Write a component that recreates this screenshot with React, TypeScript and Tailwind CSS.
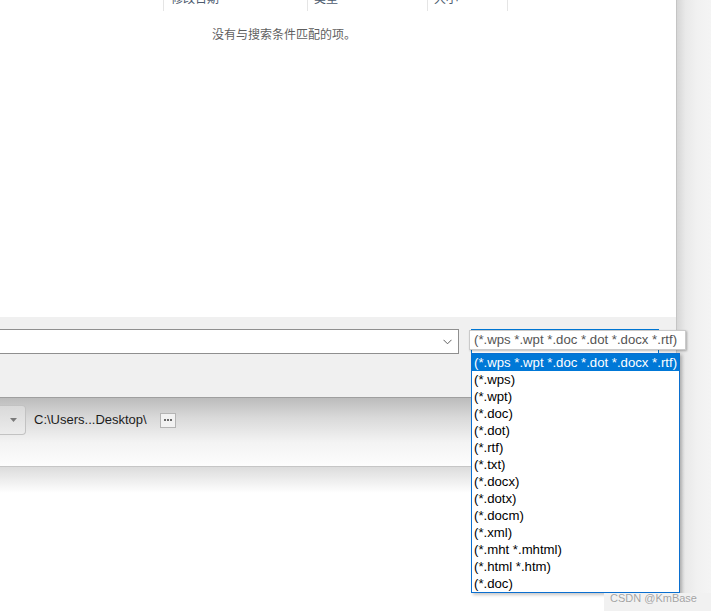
import type { ReactNode } from 'react';

const fileTypes = [
  '(*.wps *.wpt *.doc *.dot *.docx *.rtf)',
  '(*.wps)',
  '(*.wpt)',
  '(*.doc)',
  '(*.dot)',
  '(*.rtf)',
  '(*.txt)',
  '(*.docx)',
  '(*.dotx)',
  '(*.docm)',
  '(*.xml)',
  '(*.mht *.mhtml)',
  '(*.html *.htm)',
  '(*.doc)',
];

function HeaderCell({ width, children }: { width: string; children?: ReactNode }) {
  return <div className={`${width} shrink-0 border-r border-[#e5e5e5] pl-[6px]`}>{children}</div>;
}

export default function App() {
  return (
    <div className="relative flex h-[611px] w-[711px] overflow-hidden bg-white font-['Liberation_Sans',Arial,sans-serif]">
      {/* 对话框主体 */}
      <div className="flex w-[676px] shrink-0 flex-col">
        {/* 文件列表 */}
        <div className="h-[317px] shrink-0 bg-white">
          <div className="-mt-[8px] flex h-[19px] font-['Noto_Sans_CJK_SC',sans-serif] text-[12px] leading-[12px] text-[#4d5b6e]">
            <div className="w-[164px] shrink-0 border-r border-[#e5e5e5]" />
            <HeaderCell width="w-[144px]">
              <span className="pl-px">修改日期</span>
            </HeaderCell>
            <HeaderCell width="w-[120px]">类型</HeaderCell>
            <HeaderCell width="w-[80px]">大小</HeaderCell>
          </div>
          <p className="mt-[15px] pl-[212px] font-['Noto_Sans_CJK_SC',sans-serif] text-[12px] leading-[16px] text-[#5f5f5f]">
            没有与搜索条件匹配的项。
          </p>
        </div>

        {/* 文件名 / 保存类型 */}
        <div className="h-[80px] shrink-0 bg-[#f0f0f0]">
          <div className="mt-[12px] flex items-start">
            <div className="flex h-[25px] w-[459px] items-center justify-end border border-l-0 border-[#8f8f8f] bg-white pr-[5px]">
              <svg width="9" height="6" viewBox="0 0 9 6" className="mr-[1px]">
                <polyline points="0.5,0.8 4.5,4.8 8.5,0.8" fill="none" stroke="#606060" strokeWidth="1" />
              </svg>
            </div>
            <div className="ml-[12px] h-[25px] w-[188px] border border-[#0078d7] bg-white" />
          </div>
        </div>

        {/* 底部保存位置栏 */}
        <div className="h-[70px] shrink-0 border-t border-b border-t-[#9f9f9f] border-b-[#c6c6c6] bg-[linear-gradient(to_bottom,#bcbcbc,#dadada_30%,#f3f3f3_65%,#fdfdfd)]">
          <div className="mt-[7px] flex h-[30px] items-center">
            <div className="flex h-[30px] w-[26px] items-center justify-end rounded-r-[4px] border border-l-0 border-[#c2c2c2] bg-[linear-gradient(to_bottom,#d9d9d9,#ececec)] pr-[8px]">
              <svg width="7" height="4" viewBox="0 0 7 4">
                <polygon points="0,0 7,0 3.5,4" fill="#7a7a7a" />
              </svg>
            </div>
            <span className="ml-[8px] text-[13px] leading-[16px] text-[#1c1c1c]">C:\Users...Desktop\</span>
            <div className="ml-[13px] flex h-[15px] w-[16px] items-center justify-center gap-[1px] border border-[#b4b4b4] bg-[#f2f2f2]">
              <span className="h-[2px] w-[2px] bg-[#6a6a6a]" />
              <span className="h-[2px] w-[2px] bg-[#6a6a6a]" />
              <span className="h-[2px] w-[2px] bg-[#6a6a6a]" />
            </div>
          </div>
        </div>
        <div className="h-[26px] shrink-0 bg-[linear-gradient(to_bottom,#dcdcdc,#ffffff)]" />
        <div className="flex-1 bg-white" />
      </div>

      {/* 窗口右侧阴影 */}
      <div className="flex-1 border-l border-[#c4c4c4] bg-[linear-gradient(to_right,#d6d6d6,#e9e9e9_25%,#f1f1f1_60%,#f4f4f4)]" />

      {/* 提示框 */}
      <div className="absolute left-[469px] top-[330px] h-[20px] w-[217px] border border-[#cacaca] bg-white pl-[4px] text-[13.2px] leading-[18px] text-[#555555] shadow-[1px_1px_2px_rgba(0,0,0,0.28)]">
        (*.wps *.wpt *.doc *.dot *.docx *.rtf)
      </div>

      {/* 下拉列表 */}
      <div className="absolute left-[471px] top-[353px] w-[209px] border border-[#0a6fd0] bg-white shadow-[2px_2px_3px_rgba(0,0,0,0.22)]">
        {fileTypes.map((t, i) => (
          <div
            key={i}
            className={`h-[17px] pl-[2px] text-[13.2px] leading-[17px] ${
              i === 0 ? 'bg-[#0078d7] text-white' : 'text-black'
            }`}
          >
            {t}
          </div>
        ))}
      </div>

      {/* 水印 */}
      <div className="absolute bottom-0 left-[604px] right-0 top-[593px] bg-[#f1f1f1] pl-[6px] text-[11px] leading-[10px] text-[#a3a3a3] [text-shadow:0_0_1px_#ffffff]">
        CSDN @KmBase
      </div>
    </div>
  );
}
